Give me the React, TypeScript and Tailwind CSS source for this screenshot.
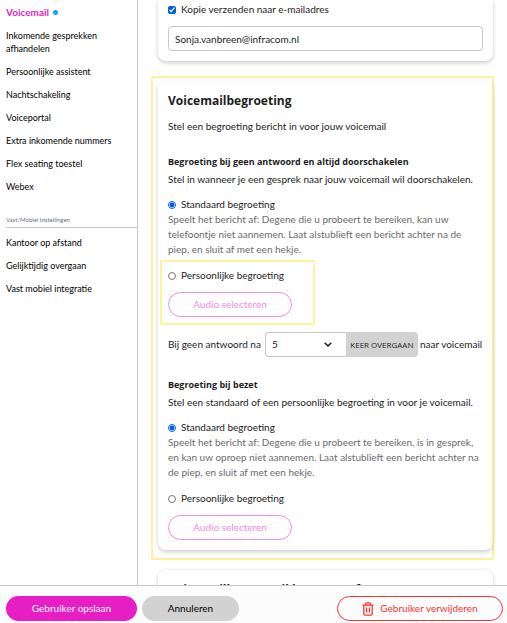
import { useState } from "react";

const settings = [
  "Inkomende gesprekken afhandelen",
  "Persoonlijke assistent",
  "Nachtschakeling",
  "Voiceportal",
  "Extra inkomende nummers",
  "Flex seating toestel",
  "Webex",
];

const mobileSettings = ["Kantoor op afstand", "Gelijktijdig overgaan", "Vast mobiel integratie"];

function Sidebar() {
  return (
    <nav className="w-[138px] shrink-0 border-r border-[#c8c8c8] pl-1.5 pt-1.5 text-[9px] leading-[13px] text-black">
      <a href="#voicemail" className="flex items-center gap-1 text-[10px] font-bold text-[#e61ec3]">
        Voicemail
        <span className="h-[5px] w-[5px] rounded-full bg-[#0aa5f5]" />
      </a>
      <ul className="mt-2.5 space-y-2.5">
        {settings.map((item) => (
          <li key={item} className="w-[112px]">
            <a href="#instellingen">{item}</a>
          </li>
        ))}
      </ul>
      <h2 className="mt-[22px] border-b border-[#c8c8c8] pb-0.5 text-[6px] leading-[10px] text-gray-500">
        Vast/Mobiel Instellingen
      </h2>
      <ul className="mt-2 space-y-2.5">
        {mobileSettings.map((item) => (
          <li key={item}>
            <a href="#mobiel">{item}</a>
          </li>
        ))}
      </ul>
    </nav>
  );
}

function Greeting({ name, text, highlight }: { name: string; text: string; highlight?: boolean }) {
  const [choice, setChoice] = useState("standaard");

  return (
    <div>
      <label className="flex items-center gap-[5px] leading-[15px]">
        <input
          type="radio"
          name={name}
          checked={choice === "standaard"}
          onChange={() => setChoice("standaard")}
          className="h-2 w-2 accent-[#0060df]"
        />
        Standaard begroeting
      </label>
      <p className="leading-[15px] text-[#6b6b6b]">{text}</p>
      <div
        className={
          highlight
            ? "-ml-2 mt-[3px] w-[155px] border-2 border-[#fff29a] p-1.5"
            : "-ml-2 mt-[3px] w-[155px] border-2 border-transparent p-1.5"
        }
      >
        <label className="flex items-center gap-[5px] leading-[15px]">
          <input
            type="radio"
            name={name}
            checked={choice === "persoonlijk"}
            onChange={() => setChoice("persoonlijk")}
            className="h-2 w-2 accent-[#0060df]"
          />
          Persoonlijke begroeting
        </label>
        <button className="mt-[9px] block h-[25px] w-[124px] rounded-full border border-[#f58be2] text-[#f58be2]">
          Audio selecteren
        </button>
      </div>
    </div>
  );
}

function Footer() {
  return (
    <footer className="flex shrink-0 items-start gap-[5px] border-t border-[#c8c8c8] bg-[#fcfcfc] pb-0.5 pl-1.5 pr-1 pt-2.5">
      <button className="h-[25px] w-[131px] rounded-full bg-[#e61ec3] text-white">Gebruiker opslaan</button>
      <button className="h-[25px] w-[97px] rounded-full bg-[#d2d2d2] text-black">Annuleren</button>
      <button className="ml-auto flex h-[25px] w-[166px] items-center justify-center gap-1.5 rounded-full border border-[#ff3232] text-[#ff3232]">
        <svg viewBox="0 0 12 14" className="h-3.5 w-3" fill="none" stroke="currentColor" strokeWidth="1.3">
          <path d="M0.5 3.2h11M3.7 3V1.8Q3.7 0.8 4.7 0.8h2.6Q8.3 0.8 8.3 1.8V3M1.8 3.2v8.6q0 1.4 1.4 1.4h5.6q1.4 0 1.4-1.4V3.2M4.6 5.5v5M7.4 5.5v5" />
        </svg>
        Gebruiker verwijderen
      </button>
    </footer>
  );
}

export default function App() {
  return (
    <div className="flex h-screen flex-col bg-white font-[Lato,sans-serif] text-[10px] text-[#1c1c1c]">
      <div className="flex min-h-0 flex-1">
        <Sidebar />
        <main className="min-w-0 flex-1 overflow-hidden px-[13px]">
          <section className="ml-[7px] mr-px rounded-b-lg px-2.5 pb-2.5 pt-0.5 shadow-[0_2px_4px_rgba(0,0,0,0.2)]">
            <label className="flex items-center gap-[5px] leading-[15px]">
              <input type="checkbox" defaultChecked className="h-2 w-2 accent-[#0060df]" />
              Kopie verzenden naar e-mailadres
            </label>
            <input
              type="email"
              aria-label="E-mailadres"
              defaultValue="Sonja.vanbreen@infracom.nl"
              className="mt-[9px] h-[25px] w-full rounded border border-[#c8c8c8] px-1.5"
            />
          </section>

          <div className="mt-[15px] border-2 border-[#fff29a] pb-2 pl-[5px] pt-[3px]">
            <section className="-mr-px rounded-lg px-2.5 pb-0.5 pt-[11px] shadow-[0_2px_4px_rgba(0,0,0,0.2)]">
              <h1 className="font-['Open_Sans',sans-serif] text-[12px] font-bold leading-[18px]">Voicemailbegroeting</h1>
              <p className="mt-[9px] leading-[15px]">Stel een begroeting bericht in voor jouw voicemail</p>

              <h2 className="mt-5 font-['Open_Sans',sans-serif] text-[9px] font-bold leading-[15px]">
                Begroeting bij geen antwoord en altijd doorschakelen
              </h2>
              <p className="mb-2.5 mt-[3px] leading-[15px]">
                Stel in wanneer je een gesprek naar jouw voicemail wil doorschakelen.
              </p>
              <Greeting
                name="geen-antwoord"
                text="Speelt het bericht af: Degene die u probeert te bereiken, kan uw telefoontje niet aannemen. Laat alstublieft een bericht achter na de piep, en sluit af met een hekje."
                highlight
              />

              <div className="mt-[7px] flex items-center whitespace-nowrap">
                <label htmlFor="rings">Bij geen antwoord na</label>
                <div className="relative ml-1 h-[25px] w-[81px]">
                  <select
                    id="rings"
                    defaultValue="5"
                    className="h-full w-full appearance-none rounded-l border border-r-0 border-[#c8c8c8] px-1.5"
                  >
                    <option>4</option>
                    <option>5</option>
                    <option>6</option>
                  </select>
                  <svg viewBox="0 0 8 5" className="pointer-events-none absolute right-3.5 top-2.5 h-[5px] w-2" fill="none" stroke="currentColor" strokeWidth="1.5">
                    <path d="M0.7 0.7L4 4L7.3 0.7" />
                  </svg>
                </div>
                <span className="flex h-[25px] w-[72px] items-center justify-center rounded-r bg-[#d2d2d2] font-['Open_Sans',sans-serif] text-[8px]">
                  KEER OVERGAAN
                </span>
                <span className="ml-0.5">naar voicemail</span>
              </div>

              <h2 className="mt-5 font-['Open_Sans',sans-serif] text-[9px] font-bold leading-[15px]">Begroeting bij bezet</h2>
              <p className="mb-2.5 mt-[3px] leading-[15px]">
                Stel een standaard of een persoonlijke begroeting in voor je voicemail.
              </p>
              <Greeting
                name="bezet"
                text="Speelt het bericht af: Degene die u probeert te bereiken, is in gesprek, en kan uw oproep niet aannemen. Laat alstublieft een bericht achter na de piep, en sluit af met een hekje."
              />
            </section>
          </div>

          <section className="ml-[7px] mr-px mt-2.5 rounded-lg px-2.5 pb-3 pt-[11px] shadow-[0_1px_4px_rgba(0,0,0,0.2)]">
            <h1 className="font-['Open_Sans',sans-serif] text-[12px] font-bold leading-[18px]">
              Voicemailbox e-mail bewaren of
            </h1>
          </section>
        </main>
      </div>
      <Footer />
    </div>
  );
}
